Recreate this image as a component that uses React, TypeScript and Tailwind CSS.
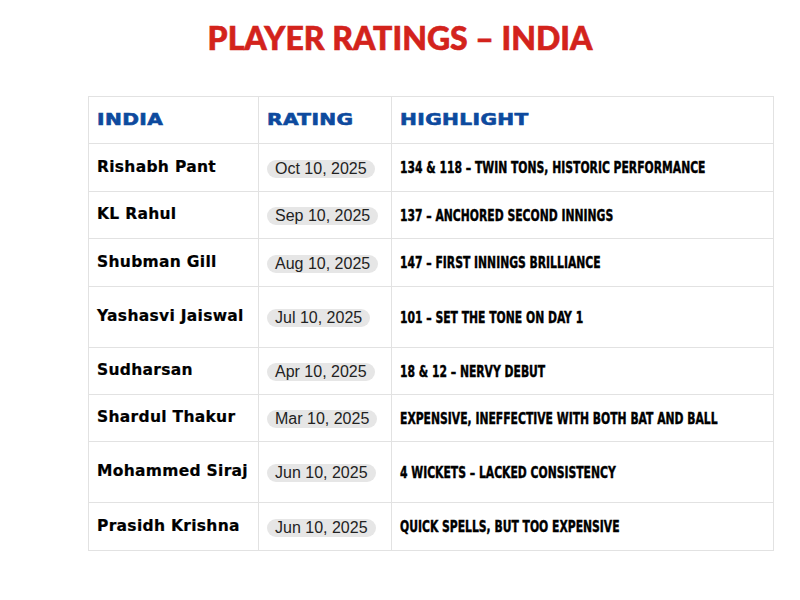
import React from 'react'

// Player ratings table – India
type Row = { name: string; date: string; highlight: string; h: string }

const rows: Row[] = [
  { name: 'Rishabh Pant', date: 'Oct 10, 2025', highlight: '134 & 118 – Twin tons, historic performance', h: 'h-[48px]' },
  { name: 'KL Rahul', date: 'Sep 10, 2025', highlight: '137 – Anchored second innings', h: 'h-[47px]' },
  { name: 'Shubman Gill', date: 'Aug 10, 2025', highlight: '147 – First innings brilliance', h: 'h-[48px]' },
  { name: 'Yashasvi Jaiswal', date: 'Jul 10, 2025', highlight: '101 – Set the tone on Day 1', h: 'h-[61px]' },
  { name: 'Sudharsan', date: 'Apr 10, 2025', highlight: '18 & 12 – Nervy debut', h: 'h-[47px]' },
  { name: 'Shardul Thakur', date: 'Mar 10, 2025', highlight: 'Expensive, ineffective with both bat and ball', h: 'h-[47px]' },
  { name: 'Mohammed Siraj', date: 'Jun 10, 2025', highlight: '4 wickets – Lacked consistency', h: 'h-[61px]' },
  { name: 'Prasidh Krishna', date: 'Jun 10, 2025', highlight: 'Quick spells, but too expensive', h: 'h-[48px]' },
]

export default function App() {
  return (
    <div className="w-[800px] h-[600px] bg-white flex flex-col">
      <h1 className="mt-[16px] h-[44px] text-center text-[32px] leading-[44px] font-black text-[#d3231c] font-['Lato',sans-serif] [-webkit-text-stroke:0.6px_#d3231c]">
        PLAYER RATINGS – INDIA
      </h1>

      <table className="ml-[88px] mt-[36px] w-[686px] border-collapse table-fixed">
        <colgroup>
          <col className="w-[170px]" />
          <col className="w-[133px]" />
          <col />
        </colgroup>
        <thead>
          <tr className="h-[47px]">
            {['INDIA', 'RATING', 'HIGHLIGHT'].map((h) => (
              <th
                key={h}
                className="border border-[#e2e2e2] px-[8px] text-left align-middle"
              >
                <span className="inline-block origin-left scale-x-[1.3] text-[15.5px] font-bold tracking-[0.3px] text-[#0d4a9e] font-['DejaVu_Sans',sans-serif] [-webkit-text-stroke:0.6px_#0d4a9e]">
                  {h}
                </span>
              </th>
            ))}
          </tr>
        </thead>
        <tbody>
          {rows.map((r) => (
            <tr key={r.name} className={r.h}>
              <td className="border border-[#e2e2e2] px-[8px] align-middle text-[15.5px] font-bold tracking-[0.3px] text-black font-['DejaVu_Sans',sans-serif] whitespace-nowrap [-webkit-text-stroke:0.2px_black]">
                {r.name}
              </td>
              <td className="border border-[#e2e2e2] px-[8px] align-middle">
                <span className="inline-block rounded-full bg-[#e6e6e6] px-[8px] h-[18px] leading-[18px] text-[16px] text-[#222] font-['Liberation_Sans',sans-serif] whitespace-nowrap">
                  {r.date}
                </span>
              </td>
              <td className="border border-[#e2e2e2] px-[8px] align-middle whitespace-nowrap">
                <span className="inline-block origin-left scale-x-[0.8] text-[15px] font-bold uppercase text-black font-['DejaVu_Sans_Condensed','DejaVu_Sans',sans-serif] [-webkit-text-stroke:0.4px_black]">
                  {r.highlight}
                </span>
              </td>
            </tr>
          ))}
        </tbody>
      </table>
    </div>
  )
}
